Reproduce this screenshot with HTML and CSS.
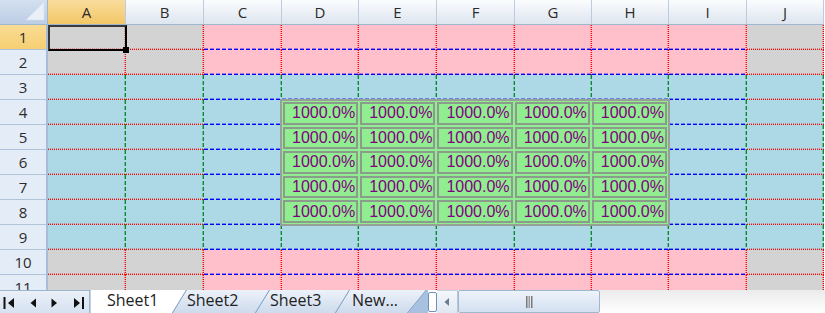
FILE: index.html
```html
<!DOCTYPE html>
<html>
<head>
<meta charset="utf-8">
<link rel="stylesheet" href="styles.css">
</head>
<body>
<div class="app">
  <div class="sheet">
    <div class="grid">
      <div class="corner"><svg width="20" height="20" viewBox="0 0 20 20"><polygon points="19,1 19,19 1,19" fill="#eaf0f8" stroke="#d2dced" stroke-width="0.5"/></svg></div>
      <div class="ch sel">A</div><div class="ch">B</div><div class="ch">C</div><div class="ch">D</div><div class="ch">E</div><div class="ch">F</div><div class="ch">G</div><div class="ch">H</div><div class="ch">I</div><div class="ch">J</div>

      <div class="rh sel">1</div>
      <div class="c gy a1"><div class="selbox"><div class="handle"></div></div></div><div class="c gy"></div><div class="c pk"></div><div class="c pk"></div><div class="c pk"></div><div class="c pk"></div><div class="c pk"></div><div class="c pk"></div><div class="c pk"></div><div class="c gy"></div>

      <div class="rh">2</div>
      <div class="c gy"></div><div class="c gy"></div><div class="c pk"></div><div class="c pk"></div><div class="c pk"></div><div class="c pk"></div><div class="c pk"></div><div class="c pk"></div><div class="c pk"></div><div class="c gy"></div>

      <div class="rh">3</div>
      <div class="c bo"></div><div class="c bo"></div><div class="c bi"></div><div class="c bi"></div><div class="c bi"></div><div class="c bi"></div><div class="c bi"></div><div class="c bi"></div><div class="c bi"></div><div class="c bo"></div>

      <div class="rh">4</div>
      <div class="c bo"></div><div class="c bo"></div><div class="c bi"></div>
      <div class="range">
        <div class="box">1000.0%</div><div class="box">1000.0%</div><div class="box">1000.0%</div><div class="box">1000.0%</div><div class="box">1000.0%</div>
        <div class="box">1000.0%</div><div class="box">1000.0%</div><div class="box">1000.0%</div><div class="box">1000.0%</div><div class="box">1000.0%</div>
        <div class="box">1000.0%</div><div class="box">1000.0%</div><div class="box">1000.0%</div><div class="box">1000.0%</div><div class="box">1000.0%</div>
        <div class="box">1000.0%</div><div class="box">1000.0%</div><div class="box">1000.0%</div><div class="box">1000.0%</div><div class="box">1000.0%</div>
        <div class="box">1000.0%</div><div class="box">1000.0%</div><div class="box">1000.0%</div><div class="box">1000.0%</div><div class="box">1000.0%</div>
      </div>
      <div class="c bi"></div><div class="c bo"></div>

      <div class="rh">5</div>
      <div class="c bo"></div><div class="c bo"></div><div class="c bi"></div><div class="c bi"></div><div class="c bo"></div>

      <div class="rh">6</div>
      <div class="c bo"></div><div class="c bo"></div><div class="c bi"></div><div class="c bi"></div><div class="c bo"></div>

      <div class="rh">7</div>
      <div class="c bo"></div><div class="c bo"></div><div class="c bi"></div><div class="c bi"></div><div class="c bo"></div>

      <div class="rh">8</div>
      <div class="c bo"></div><div class="c bo"></div><div class="c bi"></div><div class="c bi"></div><div class="c bo"></div>

      <div class="rh">9</div>
      <div class="c bo"></div><div class="c bo"></div><div class="c bi"></div><div class="c bi"></div><div class="c bi"></div><div class="c bi"></div><div class="c bi"></div><div class="c bi"></div><div class="c bi"></div><div class="c bo"></div>

      <div class="rh">10</div>
      <div class="c gy"></div><div class="c gy"></div><div class="c pk"></div><div class="c pk"></div><div class="c pk"></div><div class="c pk"></div><div class="c pk"></div><div class="c pk"></div><div class="c pk"></div><div class="c gy"></div>

      <div class="rh">11</div>
      <div class="c gy"></div><div class="c gy"></div><div class="c pk"></div><div class="c pk"></div><div class="c pk"></div><div class="c pk"></div><div class="c pk"></div><div class="c pk"></div><div class="c pk"></div><div class="c gy"></div>
    </div>
  </div>

  <div class="tabbar">
    <div class="nav">
      <svg width="89" height="22" viewBox="0 0 89 22">
        <rect x="3.5" y="6" width="2" height="12" fill="#111"/>
        <polygon points="14,7 14,17 8,12" fill="#111"/>
        <polygon points="36,7.5 36,16.5 30.5,12" fill="#111"/>
        <polygon points="51.5,7.5 51.5,16.5 57,12" fill="#111"/>
        <polygon points="74,7 74,17 80,12" fill="#111"/>
        <rect x="82" y="6" width="2" height="12" fill="#111"/>
      </svg>
    </div>
    <div class="tabs">
      <svg class="tabshapes" width="338" height="23" viewBox="0 0 338 23">
        <defs>
          <linearGradient id="tg" x1="0" y1="0" x2="0" y2="1">
            <stop offset="0" stop-color="#eef3fa"/>
            <stop offset="1" stop-color="#ccdaec"/>
          </linearGradient>
        </defs>
        <rect x="0" y="0" width="338" height="23" fill="#a9c1e0"/>
        <polygon points="260,-1 337,-1 317,23.5 245,23.5" fill="url(#tg)" stroke="#8aa5c8" stroke-width="1"/>
        <polygon points="180,-1 260,-1 245,23.5 165,23.5" fill="url(#tg)" stroke="#8aa5c8" stroke-width="1"/>
        <polygon points="97,-1 180,-1 165,23.5 82,23.5" fill="url(#tg)" stroke="#8aa5c8" stroke-width="1"/>
        <polygon points="0,-1 97,-1 82,23.5 0,23.5" fill="#ffffff" stroke="#8aa5c8" stroke-width="1"/>
      </svg>
      <span class="tab t1">Sheet1</span>
      <span class="tab t2">Sheet2</span>
      <span class="tab t3">Sheet3</span>
      <span class="tab t4">New...</span>
    </div>
    <div class="split"></div>
    <div class="sbtn"><svg width="8" height="10" viewBox="0 0 8 10"><polygon points="6,1 6,9 1.5,5" fill="#6b7b8c"/></svg></div>
    <div class="thumb"><svg width="8" height="12" viewBox="0 0 8 12"><rect x="1" y="0" width="1.5" height="12" fill="#7a7a7a"/><rect x="3.5" y="0" width="1.5" height="12" fill="#9a9a9a"/><rect x="6" y="0" width="1.5" height="12" fill="#7a7a7a"/></svg></div>
    <div class="track"></div>
  </div>
</div>
</body>
</html>
```

FILE: styles.css
```css
* {
  box-sizing: border-box;
  margin: 0;
  padding: 0;
}

:root {
  --h-red: repeating-linear-gradient(90deg, #ff0000 0 1px, transparent 1px 2px) left bottom / 100% 1px no-repeat;
  --h-red-soft: repeating-linear-gradient(90deg, rgba(255, 0, 0, 0.4) 0 1px, transparent 1px 2px) left bottom / 100% 2px no-repeat;
  --h-blue: repeating-linear-gradient(90deg, #0000ff 0 4px, transparent 4px 6px) left bottom / 100% 1px no-repeat;
  --h-blue-soft: repeating-linear-gradient(90deg, rgba(0, 0, 255, 0.4) 0 4px, transparent 4px 6px) left bottom / 100% 2px no-repeat;
  --v-red: repeating-linear-gradient(180deg, #ff0000 0 1px, transparent 1px 2px) right top / 1px 100% no-repeat;
  --v-red-soft: repeating-linear-gradient(180deg, rgba(255, 0, 0, 0.4) 0 1px, transparent 1px 2px) right top / 2px 100% no-repeat;
  --v-green: repeating-linear-gradient(180deg, #0a8a2a 0 4px, transparent 4px 6px) right top / 1px 100% no-repeat;
  --v-green-soft: repeating-linear-gradient(180deg, rgba(10, 138, 42, 0.4) 0 4px, transparent 4px 6px) right top / 2px 100% no-repeat;
}

body {
  margin: 0;
  width: 825px;
  height: 313px;
  overflow: hidden;
  background: #ffffff;
  font-family: "Open Sans", "DejaVu Sans", sans-serif;
}

.app {
  display: flex;
  flex-direction: column;
  width: 825px;
  height: 313px;
}

.sheet {
  height: 290px;
  overflow: hidden;
  flex: none;
}

.grid {
  display: grid;
  grid-template-columns: 48px 78px 78px 78px 77px 78px 78px 77px 77px 78px 77px;
  grid-template-rows: repeat(12, 25px);
}

.corner {
  background: linear-gradient(#d4e0f0, #bccde5);
  border-right: 1px solid #9eb6ce;
  border-bottom: 1px solid #9eb6ce;
  display: flex;
  align-items: flex-end;
  justify-content: flex-end;
  padding: 0 2px 3px 0;
}

.ch {
  background: linear-gradient(#fbfcfe, #dde5ef);
  border-right: 1px solid #bccbdd;
  border-bottom: 1px solid #9eb6ce;
  display: flex;
  align-items: center;
  justify-content: center;
  font-size: 15px;
  line-height: 20px;
  color: #2b2b2b;
}

.ch.sel {
  background: linear-gradient(#f9dc9e, #f3c765);
}

.rh {
  background: #e4ecf7;
  border-right: 2px solid #a7bcd6;
  border-bottom: 1px solid #b0c3da;
  display: flex;
  align-items: center;
  justify-content: center;
  font-size: 15px;
  line-height: 20px;
  color: #2b2b2b;
}

.rh.sel {
  background: linear-gradient(#f9dc94, #f6cf72);
}

/* grid lines: bottom line, right line, then cell fill */
.gy {
  background: var(--h-red), var(--h-red-soft), var(--v-red), var(--v-red-soft), #d3d3d3;
}

.pk {
  background: var(--h-blue), var(--h-blue-soft), var(--v-red), var(--v-red-soft), #ffc0cb;
}

.bo {
  background: var(--h-red), var(--h-red-soft), var(--v-green), var(--v-green-soft), #add8e6;
}

.bi {
  background: var(--h-blue), var(--h-blue-soft), var(--v-green), var(--v-green-soft), #add8e6;
}

.a1 {
  position: relative;
}

.selbox {
  position: absolute;
  left: 0;
  top: 0;
  right: -1px;
  bottom: -1px;
  border: 2px solid #000;
  border-left-color: #3a3a3a;
  border-top-color: #3a3a3a;
  z-index: 3;
}

.handle {
  position: absolute;
  right: -4px;
  bottom: -4px;
  width: 6px;
  height: 6px;
  background: #000;
}

.range {
  grid-column: 5 / span 5;
  grid-row: 5 / span 5;
  margin: -1px -1px -1px -2px;
  border: 2px solid #979f97;
  background: #90ee90;
  display: grid;
  grid-template-columns: repeat(5, 1fr);
  grid-template-rows: repeat(5, 1fr);
  position: relative;
  z-index: 1;
}

.box {
  margin: 1px;
  border: 2px solid #8c9c8c;
  display: flex;
  align-items: center;
  justify-content: flex-end;
  padding-right: 1px;
  font-family: "Liberation Sans", Arial, sans-serif;
  font-size: 16px;
  line-height: 18px;
  color: #800080;
}

.tabbar {
  display: flex;
  height: 23px;
  flex: none;
}

.nav {
  width: 90px;
  background: linear-gradient(#eaf0f8, #d6e2f1);
  border-top: 1px solid #9eb6ce;
  border-right: 1px solid #9eb6ce;
}

.nav svg {
  display: block;
}

.tabs {
  width: 338px;
  position: relative;
  display: flex;
  align-items: flex-start;
}

.tabshapes {
  position: absolute;
  left: 0;
  top: 0;
}

.tab {
  position: relative;
  font-size: 16px;
  line-height: 20px;
  color: #222;
  white-space: nowrap;
}

.t1 {
  margin-left: 17px;
  width: 80px;
}

.t2 {
  width: 83px;
}

.t3 {
  width: 82px;
}

.t4 {
  width: 76px;
}

.split {
  width: 9px;
  height: 20px;
  margin-top: 2px;
  background: #ffffff;
  border: 1px solid #6f8fb8;
  border-radius: 2px;
}

.sbtn {
  width: 21px;
  background: linear-gradient(#f4f7fb, #dfe7f2);
  border-top: 1px solid #c5d3e3;
  border-right: 1px solid #b7c8dc;
  display: flex;
  align-items: center;
  justify-content: center;
}

.thumb {
  width: 142px;
  background: linear-gradient(#eef3fa, #d3e0f1);
  border: 1px solid #9eb6ce;
  border-radius: 2px;
  display: flex;
  align-items: center;
  justify-content: center;
}

.track {
  flex: 1;
  background: linear-gradient(#ebebeb, #ffffff);
}
```
